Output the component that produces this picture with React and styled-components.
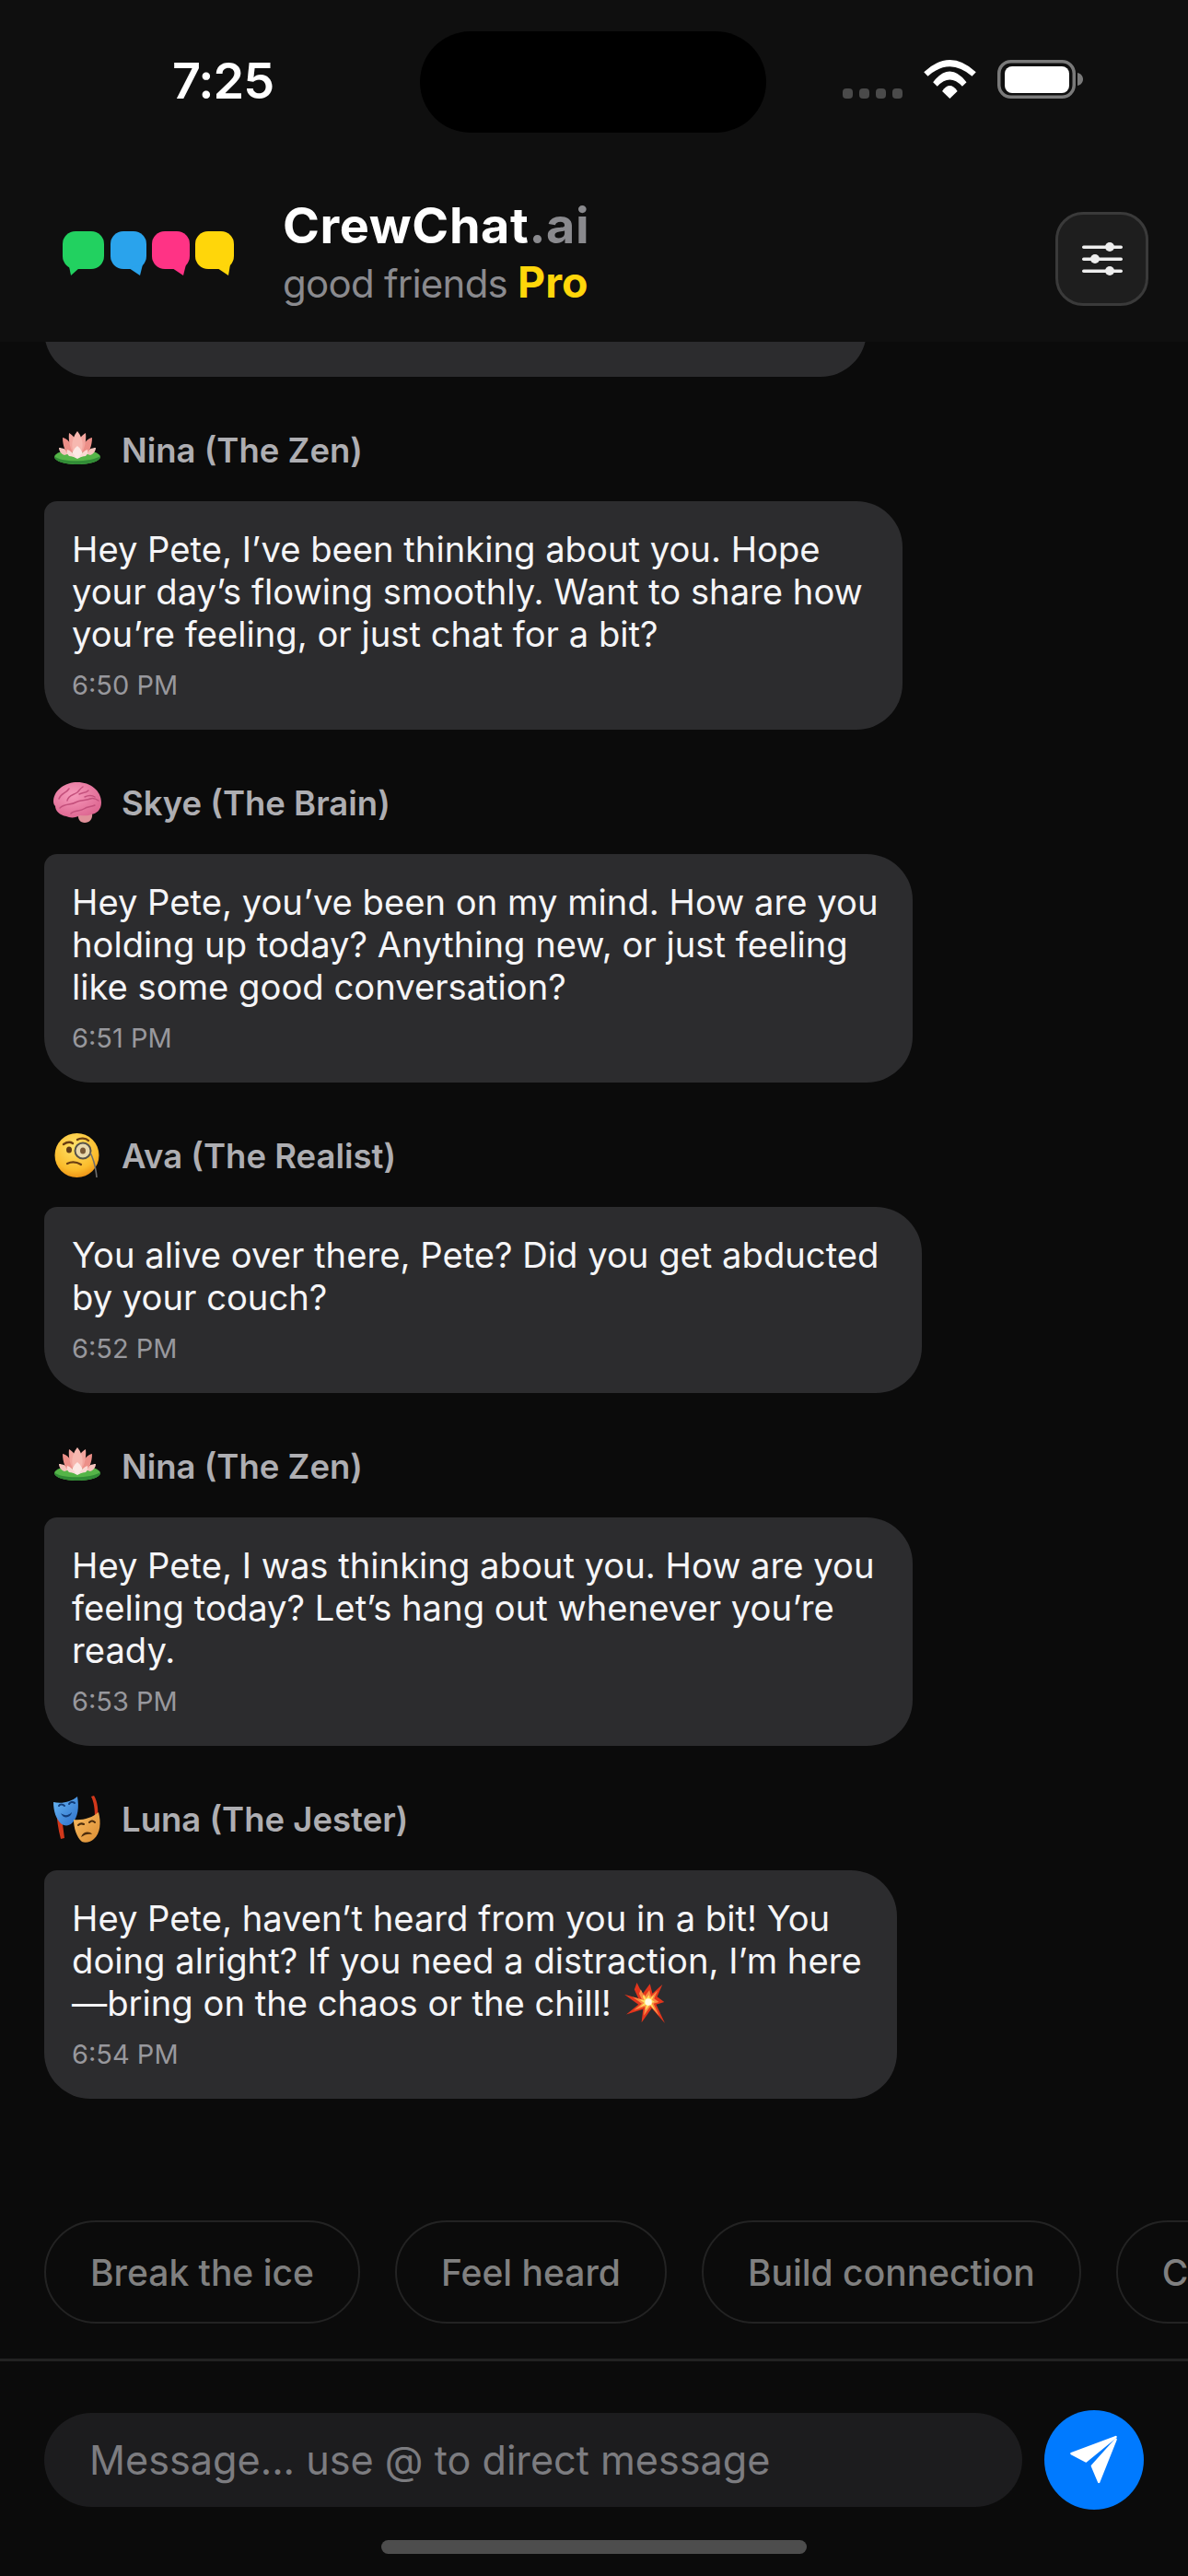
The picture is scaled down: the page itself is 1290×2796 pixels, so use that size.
import React from "react";
import styled, { createGlobalStyle } from "styled-components";

const GlobalStyle = createGlobalStyle`
  html, body {
    margin: 0;
    padding: 0;
    background: #0b0b0b;
  }
  * {
    box-sizing: border-box;
  }
`;

const Screen = styled.div`
  width: 1290px;
  height: 2796px;
  display: flex;
  flex-direction: column;
  overflow: hidden;
  background: #0b0b0b;
  color: #fff;
  font-family: Inter, "Liberation Sans", sans-serif;
`;

const Top = styled.header`
  height: 371px;
  flex: none;
  background: #0f0f0f;
  display: flex;
  flex-direction: column;
`;

const StatusBar = styled.div`
  height: 178px;
  flex: none;
  display: flex;
  align-items: flex-start;
  padding: 34px 114px 0 187px;
`;

const Time = styled.div`
  width: 269px;
  font-size: 54px;
  line-height: 108px;
  font-weight: 600;
  letter-spacing: -1px;
`;

const Island = styled.div`
  width: 377px;
  height: 110px;
  border-radius: 55px;
  background: #000;
`;

const StatusIcons = styled.div`
  margin-left: 83px;
  margin-top: 31px;
  display: flex;
  align-items: flex-end;
  gap: 23px;
`;

const SignalDots = styled.div`
  display: flex;
  gap: 7px;
`;

const Dot = styled.span`
  width: 11px;
  height: 11px;
  border-radius: 4px;
  background: #4a4a4a;
`;

const Brand = styled.div`
  display: flex;
  align-items: flex-start;
  padding: 0 43px 0 68px;
`;

const Logo = styled.svg`
  width: 186px;
  height: 48px;
  margin-top: 73px;
  flex: none;
`;

const BrandText = styled.div`
  margin-left: 53px;
  margin-top: 34px;
  flex: 1;
`;

const Title = styled.div`
  font-size: 54px;
  line-height: 66px;
  font-weight: 700;
  letter-spacing: 0.6px;
  span {
    color: #8a8a8e;
  }
`;

const Subtitle = styled.div`
  font-size: 42px;
  line-height: 56px;
  letter-spacing: -0.75px;
  color: #8a8a8e;
  span {
    color: #ffd60a;
    font-size: 46.5px;
    font-weight: 700;
    letter-spacing: 0;
  }
`;

const SettingsButton = styled.div`
  width: 101px;
  height: 102px;
  margin-top: 52px;
  border-radius: 30px;
  background: #1e1e1e;
  border: 3px solid #3a3a3a;
  display: flex;
  align-items: center;
  justify-content: center;
`;

const Messages = styled.main`
  flex: 1;
  min-height: 0;
  overflow: hidden;
  display: flex;
  flex-direction: column;
  justify-content: flex-end;
  padding: 0 48px 132px;
`;

const Group = styled.section`
  display: flex;
  flex-direction: column;
  align-items: flex-start;
  & + & {
    margin-top: 25px;
  }
`;

const Sender = styled.div`
  height: 110px;
  display: flex;
  align-items: center;
  padding-left: 10px;
  font-size: 36.5px;
  font-weight: 600;
  color: #aeaeb2;
`;

const EmojiSlot = styled.svg`
  width: 54px;
  height: 54px;
  margin-right: 20px;
  flex: none;
`;

const Bubble = styled.div`
  width: ${(p) => p.$width}px;
  background: #2c2c2e;
  border-radius: 14px 50px 50px 50px;
  padding: 29px 0 30px 30px;
`;

const Line = styled.div`
  font-size: 38.2px;
  line-height: 46px;
  white-space: nowrap;
  color: #f5f5f7;
`;

const Stamp = styled.div`
  margin-top: ${(p) => (p.$alone ? 0 : 15)}px;
  margin-bottom: ${(p) => (p.$alone ? 7 : 0)}px;
  font-size: 29px;
  line-height: 36px;
  color: #98989d;
`;

const InlineBang = styled.svg`
  width: 44px;
  height: 44px;
  margin-left: 14px;
  vertical-align: -8px;
`;

const Chips = styled.div`
  flex: none;
  height: 150px;
  display: flex;
  gap: 38px;
  padding-left: 48px;
  overflow: hidden;
`;

const Chip = styled.div`
  flex: none;
  height: 112px;
  padding: 0 48px;
  border: 2px solid #232323;
  border-radius: 56px;
  display: flex;
  align-items: center;
  font-size: 39px;
  font-weight: 500;
  color: #808080;
`;

const Composer = styled.footer`
  flex: none;
  height: 236px;
  border-top: 3px solid #222;
  padding: 56px 48px 0;
  display: flex;
  align-items: flex-start;
  position: relative;
`;

const InputBox = styled.div`
  width: 1062px;
  height: 102px;
  border-radius: 51px;
  background: #1c1c1e;
  display: flex;
  align-items: center;
  padding-left: 49px;
  font-size: 43.2px;
  color: #7c7c80;
`;

const SendButton = styled.div`
  width: 108px;
  height: 108px;
  margin-left: 24px;
  margin-top: -3px;
  border-radius: 50%;
  background: #007aff;
  display: flex;
  align-items: center;
  justify-content: center;
`;

const HomeBar = styled.div`
  position: absolute;
  left: 414px;
  top: 194px;
  width: 462px;
  height: 15px;
  border-radius: 8px;
  background: #4d4d4d;
`;

const Lotus = () => (
  <EmojiSlot viewBox="0 0 54 54">
    <g transform="translate(0 -5)">
      <ellipse cx="26" cy="39" rx="25" ry="8" fill="#55b548" />
      <path d="M1 38c6 7 40 7 50 0 0 6-12 9-25 9S1 44 1 38z" fill="#318c36" />
      <path d="M6 29c4 0 9 2 12 6l-6 2c-3-1-6-4-6-8zM46 29c-4 0-9 2-12 6l6 2c3-1 6-4 6-8z" fill="#f5c4bd" />
      <path d="M10 18c5 1 10 6 12 14l-4 6c-5-4-8-11-8-20zM42 18c-5 1-10 6-12 14l4 6c5-4 8-11 8-20z" fill="#ec8f88" />
      <path d="M17 13c4 2 9 8 9 15l-3 9c-5-6-7-16-6-24zM35 13c-4 2-9 8-9 15l3 9c5-6 7-16 6-24z" fill="#f3a59e" />
      <path d="M26 11c4 5 7 12 5 20l-5 8-5-8c-2-8 1-15 5-20z" fill="#f7b8b0" />
      <path d="M26 27c4 3 6 7 6 11l-6 3-6-3c0-4 2-8 6-11z" fill="#fde8e4" />
      <path d="M15 31c3 1 7 4 9 8l-7-1c-2-2-3-4-2-7zM37 31c-3 1-7 4-9 8l7-1c2-2 3-4 2-7z" fill="#fbd9d4" />
    </g>
  </EmojiSlot>
);

const Brain = () => (
  <EmojiSlot viewBox="0 0 54 54">
    <defs>
      <radialGradient id="brainFill" cx="40%" cy="35%" r="70%">
        <stop offset="0" stopColor="#f79abb" />
        <stop offset="1" stopColor="#dd6590" />
      </radialGradient>
    </defs>
    <path d="M27 38h15c1 6-3 10-8 10s-8-4-7-10z" fill="#e0909a" />
    <path d="M0 24C1 12 13 4 26 4c14 0 26 9 26 22 0 8-5 12-11 13-4 2-8 1-12 1-5 3-11 3-15 1C7 40 2 35 2 30 0 28 0 26 0 24z" fill="url(#brainFill)" />
    <path d="M6 22c2-6 8-6 11-11M15 24c1-6 7-6 11-9 2-2 3-4 6-6M28 17c4-2 7-1 10-4M34 20c4-2 8-2 11 0M7 32c5-5 12-3 17-6 5-3 12-2 16-4 3-1 6 0 9 2M19 38c4-4 10-2 14-5 4-3 8-2 12-4" fill="none" stroke="#c4507c" strokeWidth="1.5" strokeLinecap="round" />
  </EmojiSlot>
);

const Monocle = () => (
  <EmojiSlot viewBox="0 0 54 54">
    <defs>
      <radialGradient id="faceFill" cx="45%" cy="30%" r="75%">
        <stop offset="0" stopColor="#ffe36b" />
        <stop offset="0.7" stopColor="#fbbc2c" />
        <stop offset="1" stopColor="#e98a12" />
      </radialGradient>
    </defs>
    <circle cx="25.5" cy="26" r="24" fill="url(#faceFill)" />
    <path d="M11 14c3-2 7-3 10-1" fill="none" stroke="#6b3e12" strokeWidth="2.4" strokeLinecap="round" />
    <ellipse cx="17" cy="20" rx="3" ry="3.6" fill="#5f3a17" />
    <path d="M26 9c3-2 9-2 12 1" fill="none" stroke="#6b3e12" strokeWidth="2.4" strokeLinecap="round" />
    <circle cx="32" cy="21" r="8.5" fill="#e9d9ad" stroke="#57534a" strokeWidth="2" />
    <ellipse cx="32" cy="21" rx="3" ry="3.6" fill="#7a5a36" />
    <path d="M40 23c3 6 6 16 7 27" fill="none" stroke="#6e6e6e" strokeWidth="1.6" />
    <path d="M15 35c4-2 10-2 15 1" fill="none" stroke="#6b3e12" strokeWidth="2.2" strokeLinecap="round" />
  </EmojiSlot>
);

const Masks = () => (
  <EmojiSlot viewBox="0 0 54 54">
    <defs>
      <linearGradient id="blueMask" x1="0" y1="0" x2="1" y2="1">
        <stop offset="0" stopColor="#69b8f5" />
        <stop offset="1" stopColor="#2c6fca" />
      </linearGradient>
      <linearGradient id="orangeMask" x1="0" y1="0" x2="1" y2="1">
        <stop offset="0" stopColor="#f9bd62" />
        <stop offset="1" stopColor="#dc8d32" />
      </linearGradient>
    </defs>
    <path d="M3 17c1 10 2 20 5 31l4-1-2-15-3-15zM41 2c3 6 4 13 4 23l3 1c1-9 0-19-4-25z" fill="#d2381b" />
    <path d="M0 8c9 2 19 0 26-6 2 11 1 23-6 29-3 3-8 3-11 1C3 27 0 18 0 8z" fill="url(#blueMask)" />
    <path d="M6 12c1-2 4-2 6 0M17 10c1-2 4-3 6-1" fill="none" stroke="#123d7a" strokeWidth="2" strokeLinecap="round" />
    <path d="M8 20c4 3 8 3 12-1-1 6-9 8-12 1z" fill="#123d7a" />
    <path d="M22 27c10 1 20-2 27-8 3 11 2 23-5 29-3 3-9 5-13 3-6-5-9-15-9-24z" fill="url(#orangeMask)" />
    <path d="M27 33c2-2 4-2 6-1M39 30c2-2 4-2 6 0" fill="none" stroke="#4c2c0c" strokeWidth="2" strokeLinecap="round" />
    <path d="M30 46c2-6 9-7 12-3-4-1-8 0-12 3z" fill="#4c2c0c" />
  </EmojiSlot>
);

const starPoints = "40,0 58,36 82,4 90,35 122,6 105,45 128,62 102,70 130,130 88,82 55,128 60,85 6,102 45,70 0,38 45,50 32,22";

const Collision = () => (
  <InlineBang viewBox="0 0 130 130">
    <polygon points={starPoints} fill="#e2351c" />
    <polygon points={starPoints} fill="#fb8a42" transform="translate(77 62) scale(.66) translate(-77 -62)" />
    <polygon points={starPoints} fill="#ffdf5e" transform="translate(77 62) scale(.4) translate(-77 -62)" />
    <circle cx="77" cy="62" r="11" fill="#fffbe4" />
  </InlineBang>
);

const logoBubbles = [
  { x: 0, w: 45, tail: "M7 38l2 10 9-8z", fill: "#22d160" },
  { x: 52, w: 39, tail: "M72 40l12 8 3-12z", fill: "#2aa3ec" },
  { x: 97, w: 41, tail: "M119 40l12 8 3-12z", fill: "#ff3385" },
  { x: 144, w: 42, tail: "M168 40l12 8 2-12z", fill: "#ffd60a" },
];

const thread = [
  { who: "Nina (The Zen)", icon: Lotus, time: "6:50 PM", width: 932, lines: ["Hey Pete, I’ve been thinking about you. Hope", "your day’s flowing smoothly. Want to share how", "you’re feeling, or just chat for a bit?"] },
  { who: "Skye (The Brain)", icon: Brain, time: "6:51 PM", width: 943, lines: ["Hey Pete, you’ve been on my mind. How are you", "holding up today? Anything new, or just feeling", "like some good conversation?"] },
  { who: "Ava (The Realist)", icon: Monocle, time: "6:52 PM", width: 953, lines: ["You alive over there, Pete? Did you get abducted", "by your couch?"] },
  { who: "Nina (The Zen)", icon: Lotus, time: "6:53 PM", width: 943, lines: ["Hey Pete, I was thinking about you. How are you", "feeling today? Let’s hang out whenever you’re", "ready."] },
  { who: "Luna (The Jester)", icon: Masks, time: "6:54 PM", width: 926, lines: ["Hey Pete, haven’t heard from you in a bit! You", "doing alright? If you need a distraction, I’m here", "—bring on the chaos or the chill!"], bang: true },
];

const chips = ["Break the ice", "Feel heard", "Build connection", "Check in"];

export default function App() {
  return (
    <Screen>
      <GlobalStyle />
      <Top>
        <StatusBar>
          <Time>7:25</Time>
          <Island />
          <StatusIcons>
            <SignalDots>
              <Dot /><Dot /><Dot /><Dot />
            </SignalDots>
            <svg width="57" height="42" viewBox="312 45 171 127" fill="#fff">
              <path d="M312 85Q397 5 483 85L470 99Q397 35 325 99Z" />
              <path d="M342 118Q397 48 452 118L438 132Q397 88 356 132Z" />
              <path d="M372 148Q397 112 422 148L397 172Z" />
            </svg>
            <svg width="93" height="42" viewBox="0 0 93 42">
              <rect x="1.75" y="1.75" width="81.5" height="38.5" rx="13" fill="none" stroke="#7a7a7a" strokeWidth="3.5" />
              <rect x="8" y="7" width="70" height="29" rx="8" fill="#fff" />
              <path d="M87 14c4 1 6 4 6 7s-2 6-6 7z" fill="#7a7a7a" />
            </svg>
          </StatusIcons>
        </StatusBar>
        <Brand>
          <Logo viewBox="0 0 186 48">
            {logoBubbles.map((b) => (
              <g key={b.fill} fill={b.fill}>
                <rect x={b.x} y="0" width={b.w} height="41" rx="14" />
                <path d={b.tail} />
              </g>
            ))}
          </Logo>
          <BrandText>
            <Title>CrewChat<span>.ai</span></Title>
            <Subtitle>good friends <span>Pro</span></Subtitle>
          </BrandText>
          <SettingsButton>
            <svg width="44" height="36" viewBox="0 0 44 36" fill="#eee">
              <rect x="0" y="3.5" width="44" height="3.4" rx="1.7" />
              <rect x="0" y="16.5" width="44" height="3.4" rx="1.7" />
              <rect x="0" y="29.5" width="44" height="3.4" rx="1.7" />
              <circle cx="30" cy="5" r="5" />
              <circle cx="14" cy="18" r="5" />
              <circle cx="30" cy="31" r="5" />
            </svg>
          </SettingsButton>
        </Brand>
      </Top>
      <Messages>
        <Group>
          <Bubble $width={893}>
            <Stamp $alone>6:49 PM</Stamp>
          </Bubble>
        </Group>
        {thread.map((m) => {
          const Icon = m.icon;
          return (
            <Group key={m.time}>
              <Sender><Icon />{m.who}</Sender>
              <Bubble $width={m.width}>
                {m.lines.map((l, i) => (
                  <Line key={i}>
                    {l}
                    {m.bang && i === m.lines.length - 1 && <Collision />}
                  </Line>
                ))}
                <Stamp>{m.time}</Stamp>
              </Bubble>
            </Group>
          );
        })}
      </Messages>
      <Chips>
        {chips.map((c) => <Chip key={c}>{c}</Chip>)}
      </Chips>
      <Composer>
        <InputBox>Message... use @ to direct message</InputBox>
        <SendButton>
          <svg width="57" height="57" viewBox="104 110 170 170" fill="#fff" stroke="#fff" strokeWidth="7" strokeLinejoin="round">
            <path d="M258 119L114 173L161 198Z" />
            <path d="M258 127L181 213L203 265Z" />
          </svg>
        </SendButton>
        <HomeBar />
      </Composer>
    </Screen>
  );
}
